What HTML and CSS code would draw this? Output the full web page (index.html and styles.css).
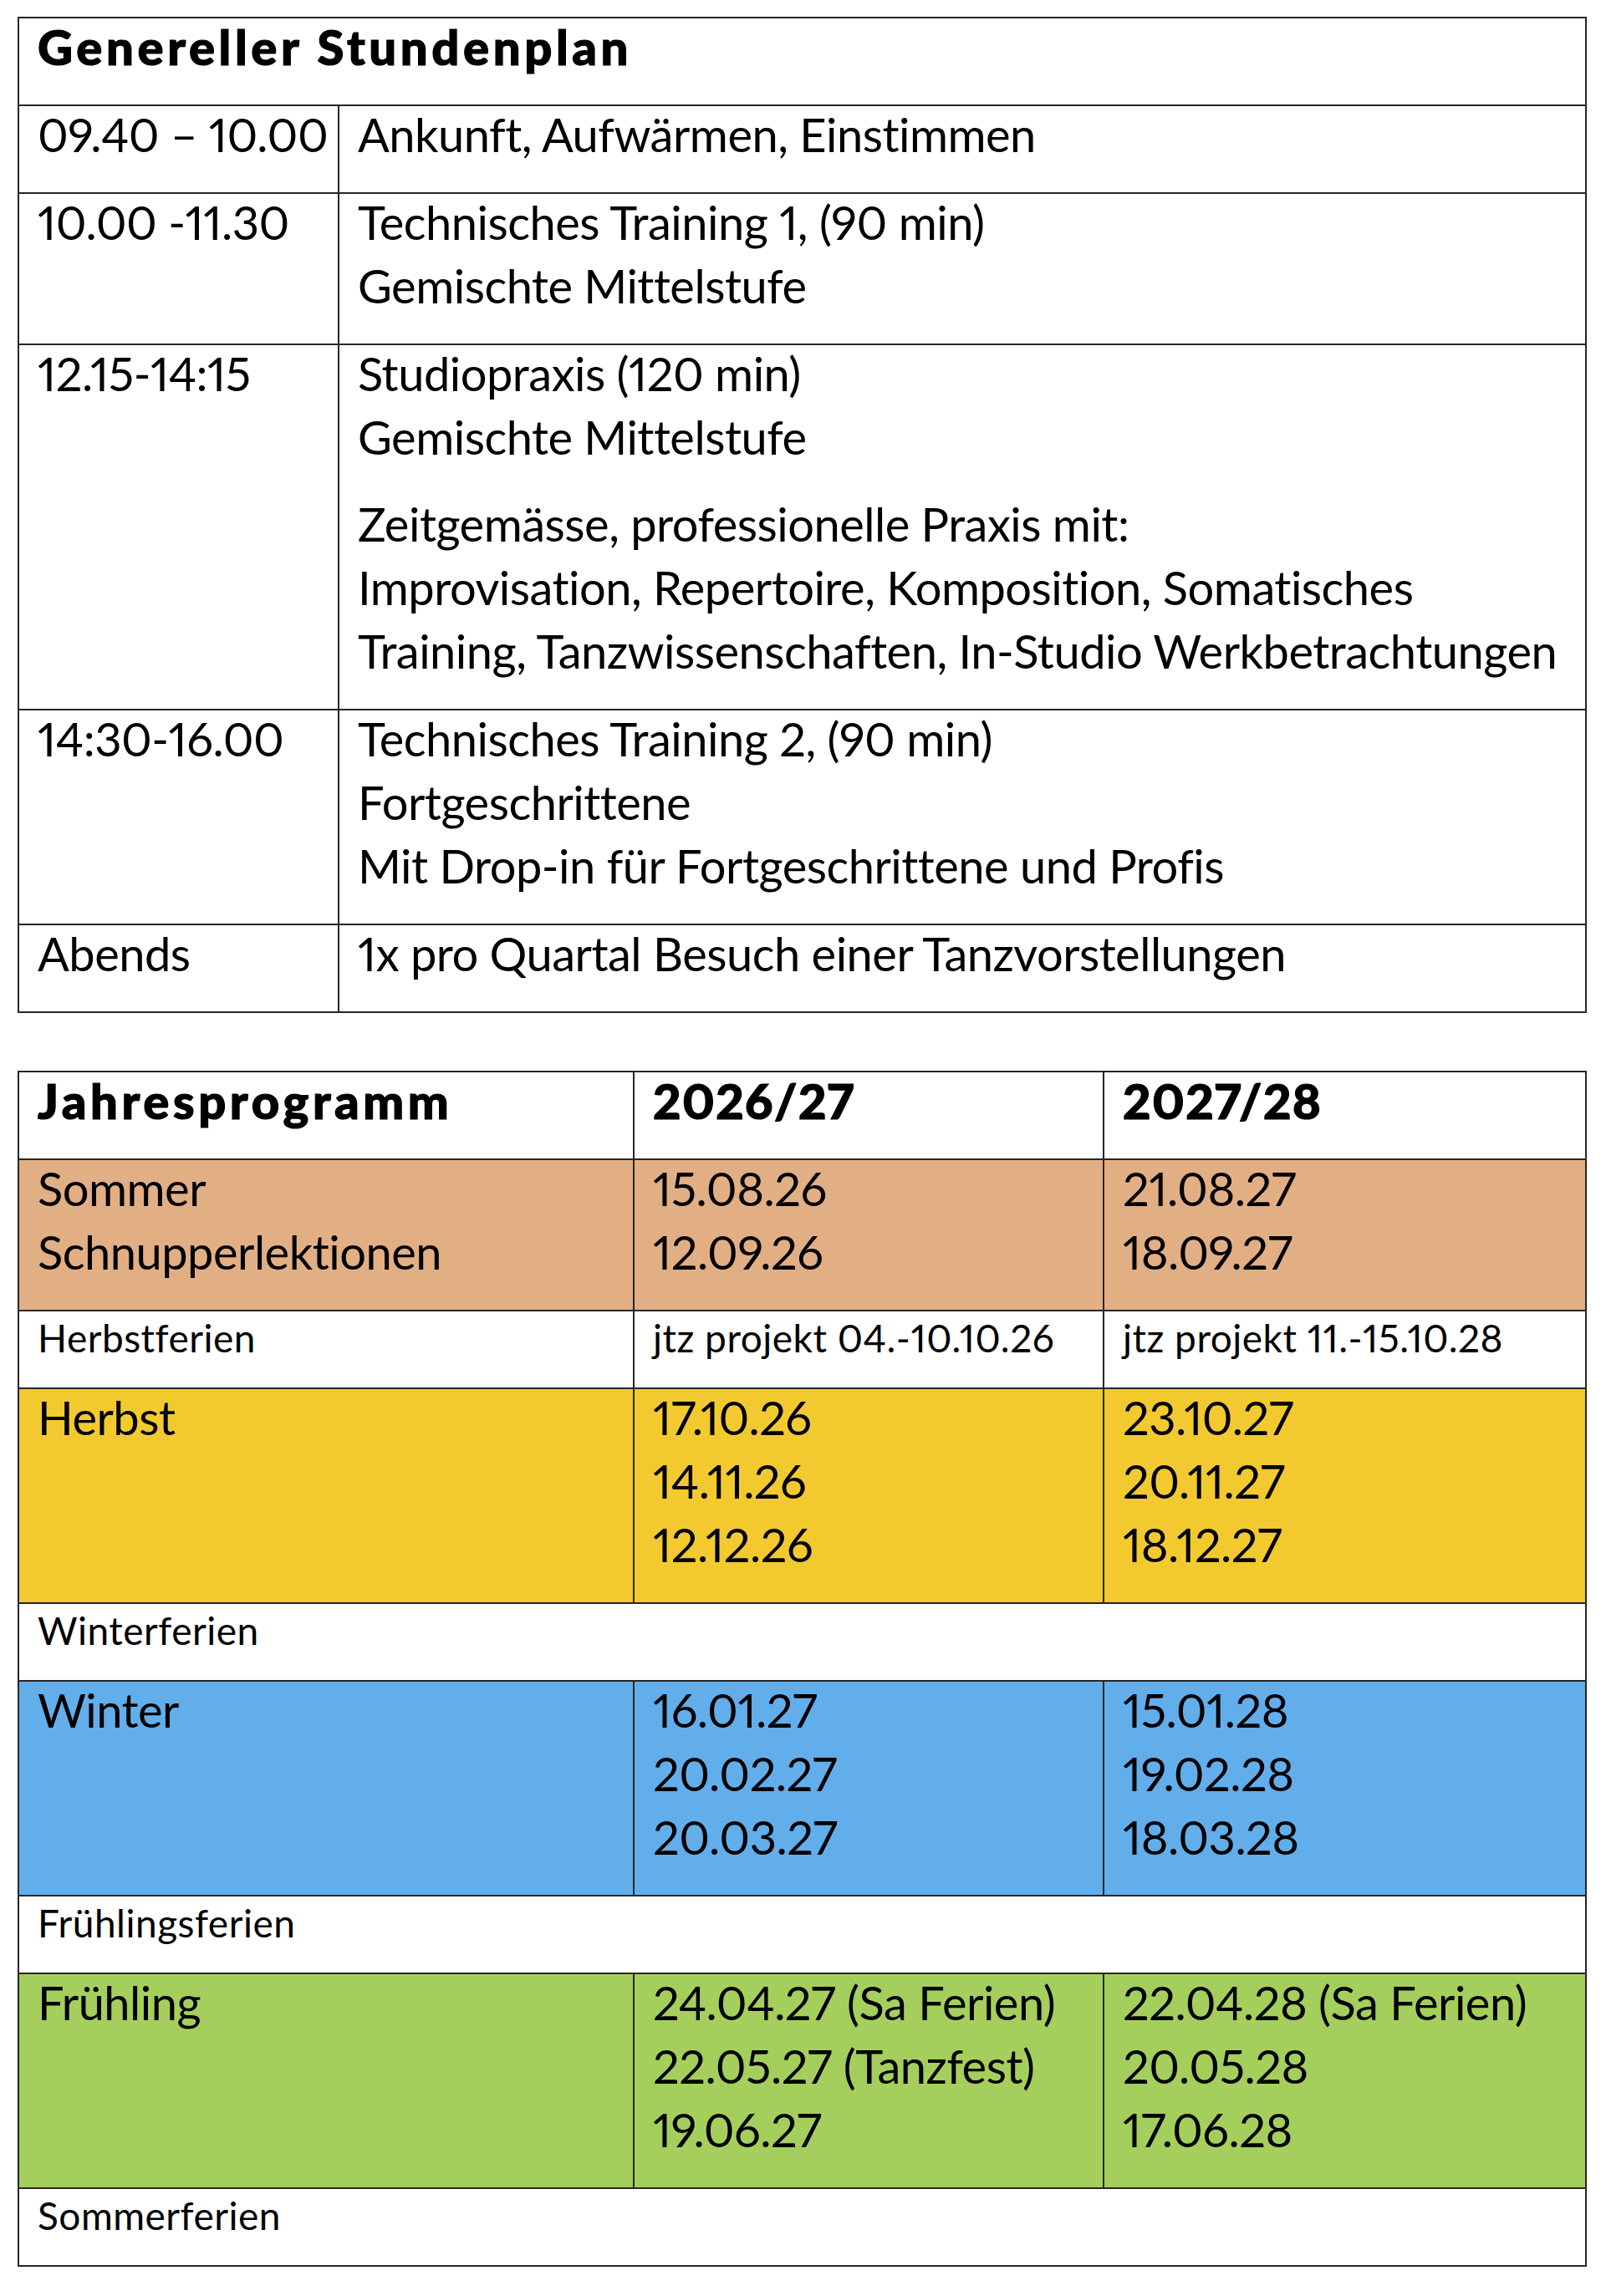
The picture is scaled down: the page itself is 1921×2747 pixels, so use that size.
FILE: index.html
```html
<!DOCTYPE html>
<html lang="de">
<head>
<meta charset="utf-8">
<title>Stundenplan</title>
<link rel="stylesheet" href="styles.css">
</head>
<body>
<main class="page">
  <table class="grid plan">
    <colgroup><col class="c-time"><col class="c-desc"></colgroup>
    <tr class="head">
      <td colspan="2"><p>Genereller Stundenplan</p></td>
    </tr>
    <tr>
      <td><p>09.40 – 10.00</p></td>
      <td><p>Ankunft, Aufwärmen, Einstimmen</p></td>
    </tr>
    <tr>
      <td><p>10.00 -11.30</p></td>
      <td><p>Technisches Training 1, (90 min)</p><p>Gemischte Mittelstufe</p></td>
    </tr>
    <tr>
      <td><p>12.15-14:15</p></td>
      <td>
        <p>Studiopraxis (120 min)</p>
        <p>Gemischte Mittelstufe</p>
        <p class="gap">Zeitgemässe, professionelle Praxis mit:</p>
        <p>Improvisation, Repertoire, Komposition, Somatisches<br>Training, Tanzwissenschaften, In-Studio Werkbetrachtungen</p>
      </td>
    </tr>
    <tr>
      <td><p>14:30-16.00</p></td>
      <td><p>Technisches Training 2, (90 min)</p><p>Fortgeschrittene</p><p>Mit Drop-in für Fortgeschrittene und Profis</p></td>
    </tr>
    <tr>
      <td><p>Abends</p></td>
      <td><p>1x pro Quartal Besuch einer Tanzvorstellungen</p></td>
    </tr>
  </table>

  <table class="grid year">
    <colgroup><col class="c-season"><col class="c-y1"><col class="c-y2"></colgroup>
    <tr class="head">
      <td><p>Jahresprogramm</p></td>
      <td class="num"><p>2026/27</p></td>
      <td class="num"><p>2027/28</p></td>
    </tr>
    <tr class="summer">
      <td><p>Sommer</p><p>Schnupperlektionen</p></td>
      <td><p>15.08.26</p><p>12.09.26</p></td>
      <td><p>21.08.27</p><p>18.09.27</p></td>
    </tr>
    <tr class="small">
      <td><p>Herbstferien</p></td>
      <td><p>jtz projekt 04.-10.10.26</p></td>
      <td><p>jtz projekt 11.-15.10.28</p></td>
    </tr>
    <tr class="autumn">
      <td><p>Herbst</p></td>
      <td><p>17.10.26</p><p>14.11.26</p><p>12.12.26</p></td>
      <td><p>23.10.27</p><p>20.11.27</p><p>18.12.27</p></td>
    </tr>
    <tr class="small">
      <td colspan="3"><p>Winterferien</p></td>
    </tr>
    <tr class="winter">
      <td><p>Winter</p></td>
      <td><p>16.01.27</p><p>20.02.27</p><p>20.03.27</p></td>
      <td><p>15.01.28</p><p>19.02.28</p><p>18.03.28</p></td>
    </tr>
    <tr class="small">
      <td colspan="3"><p>Frühlingsferien</p></td>
    </tr>
    <tr class="spring">
      <td><p>Frühling</p></td>
      <td><p>24.04.27 (Sa Ferien)</p><p>22.05.27 (Tanzfest)</p><p>19.06.27</p></td>
      <td><p>22.04.28 (Sa Ferien)</p><p>20.05.28</p><p>17.06.28</p></td>
    </tr>
    <tr class="small">
      <td colspan="3"><p>Sommerferien</p></td>
    </tr>
  </table>
</main>
</body>
</html>
```

FILE: styles.css
```css
html, body {
  margin: 0;
  padding: 0;
  background: #ffffff;
}

.page {
  padding: 20px 0 40px 21px;
  font-family: "Lato", "Open Sans", sans-serif;
  color: #000;
}

.grid {
  border-collapse: collapse;
  width: 1877px;
  table-layout: fixed;
}

.grid + .grid {
  margin-top: 69px;
}

.grid td {
  border: 2px solid #262626;
  vertical-align: top;
  padding: 0 10px 31px 22px;
  font-size: 56px;
  line-height: 76px;
  letter-spacing: -0.5px;
  font-variant-numeric: proportional-nums;
}

.grid p {
  margin: 0;
  white-space: nowrap;
}

.grid td > p:first-child {
  margin-top: -4px;
}

.grid p.gap {
  margin-top: 28px;
}

.head td {
  font-size: 58px;
  font-weight: 900;
  letter-spacing: 4.6px;
  -webkit-text-stroke: 1.2px #000;
  padding-bottom: 31px;
}

.head td.num {
  letter-spacing: 1.5px;
}

.c-time { width: 383px; }
.c-season { width: 736px; }
.c-y1 { width: 562px; }

.small td {
  font-size: 46px;
  line-height: 57px;
  letter-spacing: 0.5px;
  padding-top: 3px;
  padding-bottom: 31px;
}

.small td > p:first-child {
  margin-top: 0;
}

.summer td { background: #e2af85; }
.autumn td { background: #f2ca30; }
.winter td { background: #62aeeb; }
.spring td { background: #a5cf5c; }
```
